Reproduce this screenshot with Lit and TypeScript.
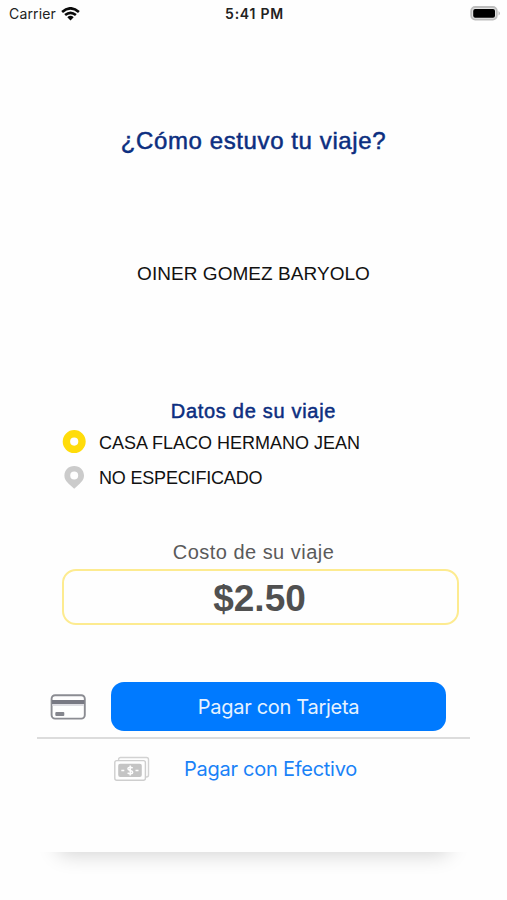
import { LitElement, html, css } from "lit";
import { customElement } from "lit/decorators.js";

@customElement("app-root")
export class AppRoot extends LitElement {
  static styles = css`
    :host {
      display: flex;
      flex-direction: column;
      width: 507px;
      height: 900px;
      overflow: hidden;
      background: #fefefe;
      color: #111;
      font-family: "Liberation Sans", Arial, sans-serif;
      white-space: nowrap;
    }
    svg {
      display: block;
      flex: none;
    }
    .status {
      display: grid;
      grid-template-columns: 1fr auto 1fr;
      align-items: center;
      height: 28px;
      padding: 0 6px 0 9px;
      font: 14px/28px Inter, sans-serif;
      color: #222;
    }
    .carrier {
      display: flex;
      align-items: center;
      gap: 5px;
      letter-spacing: 0.15px;
    }
    .time {
      font-weight: 600;
      letter-spacing: 0.75px;
      margin-right: 1px;
    }
    .battery {
      justify-self: end;
    }
    h1,
    h2,
    p {
      margin: 0;
      font-weight: 400;
      text-align: center;
    }
    h1 {
      margin-top: 97px;
      font-size: 24px;
      line-height: 32px;
      letter-spacing: 0.6px;
      color: #0c2e80;
      -webkit-text-stroke: 0.5px #0c2e80;
    }
    .driver {
      margin-top: 105px;
      font-size: 19px;
      line-height: 24px;
      letter-spacing: 0.05px;
    }
    h2 {
      margin-top: 113px;
      font-size: 20px;
      line-height: 24px;
      letter-spacing: 0.7px;
      color: #0c2e80;
      -webkit-text-stroke: 0.5px #0c2e80;
    }
    .stops {
      display: flex;
      flex-direction: column;
      gap: 11px;
      margin: 7px 0 0 62px;
    }
    .stop {
      display: flex;
      align-items: center;
      gap: 12px;
      height: 24px;
      font-size: 18px;
    }
    .stop span {
      padding-top: 2px;
    }
    .destination {
      letter-spacing: -0.18px;
    }
    .cost-label {
      margin-top: 50px;
      font-size: 20px;
      line-height: 26px;
      letter-spacing: 0.48px;
      color: #5a5a5a;
    }
    .cost {
      box-sizing: border-box;
      width: 397px;
      height: 56px;
      margin: 4px 0 0 62px;
      padding-right: 2px;
      border: 2px solid #fdeb90;
      border-radius: 14px;
      font-size: 37px;
      line-height: 55px;
      font-weight: 700;
      color: #505050;
      text-align: center;
    }
    .panel {
      display: flex;
      flex-direction: column;
      width: 433px;
      height: 170px;
      margin: 57px 0 0 37px;
    }
    .row {
      display: flex;
      align-items: center;
      font: 20px/24px Inter, sans-serif;
      letter-spacing: -0.3px;
    }
    .card-row {
      height: 49px;
      padding: 0 24px 6px 13px;
      gap: 25px;
      border-bottom: 2px solid #dcdcdc;
    }
    .pay {
      flex: 1;
      height: 49px;
      border: 0;
      border-radius: 13px;
      background: #007aff;
      color: #e6f2ff;
      font: inherit;
      letter-spacing: inherit;
    }
    .cash-row {
      height: 59px;
      padding-left: 76px;
      gap: 34px;
      color: #1a82f7;
      letter-spacing: -0.26px;
    }
    .cash {
      padding-top: 1px;
    }
    .shadow {
      height: 40px;
      margin: 0 37px;
      overflow: hidden;
    }
    .shadow::before {
      content: "";
      display: block;
      height: 30px;
      margin: -30px 20px 0;
      border-radius: 10px;
      box-shadow: 0 3px 20px rgba(0, 0, 0, 0.17);
    }
  `;

  render() {
    return html`
      <header class="status">
        <div class="carrier">
          <span>Carrier</span>
          <svg width="19" height="14" viewBox="0 0 19 14" fill="none" stroke="#0b0b0b" stroke-width="2.6">
            <path d="M1.1 5Q9.5-2.4 17.9 5M4.1 8.1Q9.5 3.5 14.9 8.1" />
            <path d="M6.3 10.2Q9.5 7.5 12.7 10.2L9.5 13.6Z" fill="#0b0b0b" stroke="none" />
          </svg>
        </div>
        <span class="time">5:41 PM</span>
        <svg class="battery" width="31" height="16" viewBox="0 0 31 16">
          <rect x="1.2" y="1" width="25.6" height="12.6" rx="4" fill="#e4e4e4" stroke="#bdbdbd" stroke-width="1.8" />
          <rect x="3.2" y="3" width="21.8" height="8.8" rx="2" fill="#000" />
          <path d="M28.6 5Q31 7.3 28.6 9.6Z" fill="#aaa" />
        </svg>
      </header>
      <h1>¿Cómo estuvo tu viaje?</h1>
      <p class="driver">OINER GOMEZ BARYOLO</p>
      <h2>Datos de su viaje</h2>
      <div class="stops">
        <div class="stop">
          <svg width="25" height="24" viewBox="0 0 25 24">
            <circle cx="12.2" cy="11.6" r="7.8" fill="none" stroke="#ffdc0a" stroke-width="7.4" />
          </svg>
          <span>CASA FLACO HERMANO JEAN</span>
        </div>
        <div class="stop">
          <svg width="25" height="24" viewBox="0 0 25 24">
            <path
              fill="#cbcbcb"
              fill-rule="evenodd"
              d="M12.2 1C6.5 1 2.4 5.2 2.4 10.6c0 4.7 3.3 7.2 6.2 10l3.6 3.2 3.6-3.2c2.9-2.8 6.2-5.3 6.2-10C22 5.2 17.9 1 12.2 1Zm0 5.6a4 4 0 1 1 0 8 4 4 0 0 1 0-8Z"
            />
          </svg>
          <span class="destination">NO ESPECIFICADO</span>
        </div>
      </div>
      <p class="cost-label">Costo de su viaje</p>
      <div class="cost">$2.50</div>
      <section class="panel">
        <div class="row card-row">
          <svg width="36" height="26" viewBox="0 0 36 26">
            <rect x="1.6" y="1.2" width="33.2" height="23.4" rx="3.5" fill="#fefefe" stroke="#8b8c92" stroke-width="1.9" />
            <path d="M2 6h32.4v4H2Z" fill="#787983" />
            <path d="M2.5 10h31.4v2H2.5Z" fill="#dddde2" />
            <rect x="5.3" y="18" width="9" height="4" rx="1" fill="#85868d" />
          </svg>
          <button class="pay">Pagar con Tarjeta</button>
        </div>
        <div class="row cash-row">
          <svg width="37" height="26" viewBox="0 0 37 26">
            <rect x="5.6" y="1.5" width="29.9" height="19.5" rx="2" fill="#fefefe" stroke="#d2d2d2" stroke-width="1.4" />
            <rect x="1.8" y="4.6" width="30.6" height="19.6" rx="2" fill="#fefefe" stroke="#cecece" stroke-width="1.4" />
            <rect x="5.2" y="7.8" width="23.6" height="13.2" rx="2" fill="#c4c4c4" />
            <path
              d="M8.3 14.5h3M22.5 14.5h3M19.6 12.1c-1.4-1.4-4.7-1.2-4.7.7 0 2.3 4.8 1.2 4.8 3.4 0 2-3.7 2.1-5.1.5M17.2 9.5v10"
              fill="none"
              stroke="#fefefe"
              stroke-width="1.5"
            />
          </svg>
          <span class="cash">Pagar con Efectivo</span>
        </div>
      </section>
      <div class="shadow"></div>
    `;
  }
}
